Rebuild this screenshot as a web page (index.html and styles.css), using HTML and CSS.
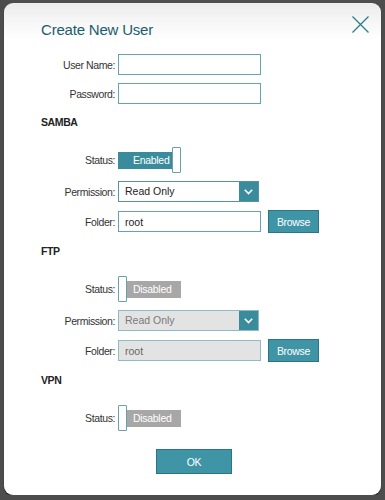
FILE: index.html
```html
<!DOCTYPE html>
<html lang="en">
<head>
    <meta charset="UTF-8">
    <meta name="viewport" content="width=device-width, initial-scale=1.0">
    <title>Create New User</title>
    <link rel="stylesheet" href="styles.css">
</head>
<body>
    <div class="dialog">
        <div class="dialog-header">
            <h1 class="dialog-title">Create New User</h1>
            <button class="close-btn" aria-label="Close">
                <svg width="17" height="17" viewBox="0 0 17 17">
                    <path d="M0.5 0.5 L16.5 16.5 M16.5 0.5 L0.5 16.5" stroke="#2f7c8b" stroke-width="1.3" fill="none"/>
                </svg>
            </button>
        </div>

        <!-- Conta -->
        <div class="account">
            <div class="row">
                <label class="label">User Name:</label>
                <input class="text-input" type="text">
            </div>
            <div class="row">
                <label class="label">Password:</label>
                <input class="text-input" type="password">
            </div>
        </div>

        <!-- SAMBA -->
        <div class="section">
            <h2 class="section-title">SAMBA</h2>
            <div class="row">
                <span class="label">Status:</span>
                <div class="toggle on">
                    <span class="toggle-bar">Enabled</span>
                    <span class="toggle-knob"></span>
                </div>
            </div>
            <div class="row">
                <span class="label">Permission:</span>
                <div class="select">
                    <span class="select-value">Read Only</span>
                    <span class="select-arrow">
                        <svg width="9" height="6" viewBox="0 0 9 6"><path d="M0.8 0.8 L4.5 4.6 L8.2 0.8" stroke="#fff" stroke-width="1.6" fill="none"/></svg>
                    </span>
                </div>
            </div>
            <div class="row">
                <span class="label">Folder:</span>
                <input class="text-input" type="text" value="root">
                <button class="btn browse">Browse</button>
            </div>
        </div>

        <!-- FTP -->
        <div class="section">
            <h2 class="section-title">FTP</h2>
            <div class="row">
                <span class="label">Status:</span>
                <div class="toggle off">
                    <span class="toggle-knob"></span>
                    <span class="toggle-bar">Disabled</span>
                </div>
            </div>
            <div class="row">
                <span class="label">Permission:</span>
                <div class="select disabled">
                    <span class="select-value">Read Only</span>
                    <span class="select-arrow">
                        <svg width="9" height="6" viewBox="0 0 9 6"><path d="M0.8 0.8 L4.5 4.6 L8.2 0.8" stroke="#fff" stroke-width="1.6" fill="none"/></svg>
                    </span>
                </div>
            </div>
            <div class="row">
                <span class="label">Folder:</span>
                <input class="text-input" type="text" value="root" disabled>
                <button class="btn browse">Browse</button>
            </div>
        </div>

        <!-- VPN -->
        <div class="section">
            <h2 class="section-title">VPN</h2>
            <div class="row">
                <span class="label">Status:</span>
                <div class="toggle off">
                    <span class="toggle-knob"></span>
                    <span class="toggle-bar">Disabled</span>
                </div>
            </div>
        </div>

        <div class="actions">
            <button class="btn ok">OK</button>
        </div>
    </div>
</body>
</html>
```

FILE: styles.css
```css
/* Fundo e janela */
body {
    margin: 0;
    background: #4d4d4d;
    font-family: 'Liberation Sans', Arial, sans-serif;
    color: #333;
}

.dialog {
    box-sizing: border-box;
    width: 377px;
    height: 492px;
    margin: 3px 4px 0 4px;
    padding: 18px 12px 0 37px;
    background: linear-gradient(#ececec, #ffffff 36px);
    border-radius: 9px;
    box-shadow: 0 1px 1px #151515;
}

.dialog-header {
    display: flex;
    justify-content: space-between;
    align-items: flex-start;
}

.dialog-title {
    margin: 0;
    font-size: 15px;
    line-height: 18px;
    font-weight: normal;
    color: #1b5d6d;
    letter-spacing: -0.2px;
}

.close-btn {
    margin-top: -5px;
    padding: 0;
    width: 17px;
    height: 17px;
    border: none;
    background: none;
    line-height: 0;
}

/* Linhas do formulario */
.account {
    display: flex;
    flex-direction: column;
    gap: 8px;
    margin-top: 15px;
}

.section {
    display: flex;
    flex-direction: column;
    gap: 8px;
    margin-top: 12px;
}

.section-title {
    margin: 0 0 11px 0;
    font-size: 10.5px;
    line-height: 12px;
    font-weight: bold;
    color: #222;
    letter-spacing: -0.4px;
}

.row {
    display: flex;
    align-items: center;
}

.label {
    width: 74px;
    margin-right: 3px;
    text-align: right;
    font-size: 10.5px;
    letter-spacing: -0.4px;
    color: #333;
}

.text-input {
    box-sizing: border-box;
    width: 143px;
    height: 21px;
    margin: 0;
    padding: 0 6px;
    border: 1px solid #65a3ae;
    background: #fff;
    font-family: 'Liberation Sans', Arial, sans-serif;
    font-size: 10.5px;
    color: #222;
    outline: none;
}

.text-input:disabled {
    background: #e3e3e3;
    border-color: #8dbcc4;
    color: #666;
}

/* Interruptor */
.toggle {
    display: flex;
    align-items: center;
    width: 63px;
}

.toggle-bar {
    box-sizing: border-box;
    width: 54px;
    height: 17px;
    line-height: 17px;
    font-size: 10.5px;
    letter-spacing: -0.3px;
    color: #fff;
}

.toggle.on .toggle-bar {
    background: #3a8c9d;
    padding-left: 15px;
}

.toggle.off .toggle-bar {
    background: #a7a7a7;
    padding-left: 6px;
}

.toggle-knob {
    box-sizing: border-box;
    width: 9px;
    height: 26px;
    background: #fff;
    border: 1px solid #6b9fa9;
    border-radius: 1px;
}

/* Lista suspensa */
.select {
    box-sizing: border-box;
    display: flex;
    align-items: stretch;
    width: 141px;
    height: 21px;
    border: 1px solid #4f95a2;
    background: #fff;
}

.select-value {
    flex: 1;
    padding-left: 6px;
    line-height: 19px;
    font-size: 10.5px;
    color: #222;
}

.select-arrow {
    display: flex;
    align-items: center;
    justify-content: center;
    width: 19px;
    background: #3a8c9d;
}

.select.disabled {
    background: #e3e3e3;
    border-color: #8dbcc4;
}

.select.disabled .select-value {
    color: #7a7a7a;
}

/* Botoes */
.btn {
    box-sizing: border-box;
    border: 1px solid #2c7585;
    background: #3f95a6;
    color: #fff;
    font-family: 'Liberation Sans', Arial, sans-serif;
    font-size: 10.5px;
    letter-spacing: -0.3px;
    padding: 0;
    cursor: pointer;
}

.browse {
    width: 51px;
    height: 23px;
    margin-left: 7px;
}

.actions {
    display: flex;
    margin-top: 18px;
}

.ok {
    width: 76px;
    height: 25px;
    margin-left: 115px;
}
```
